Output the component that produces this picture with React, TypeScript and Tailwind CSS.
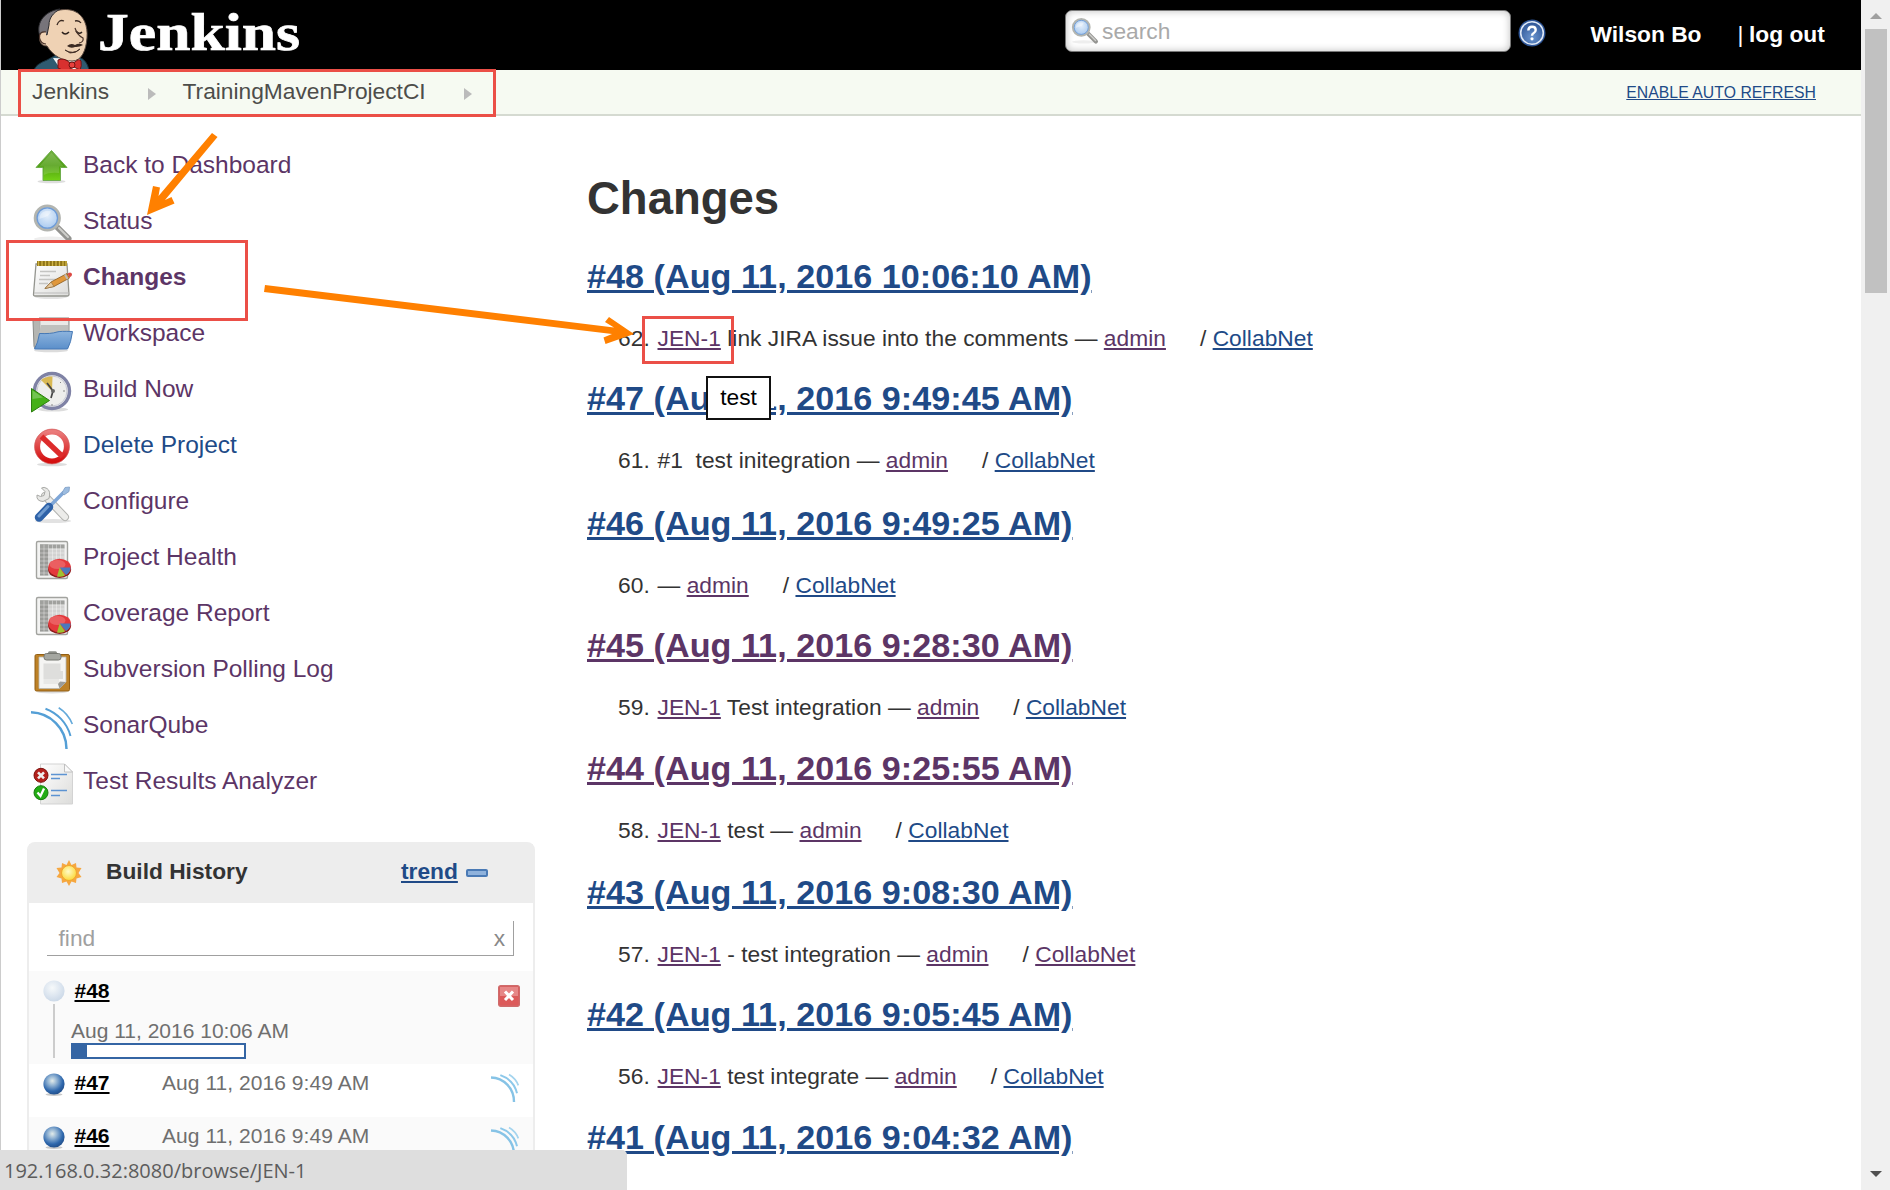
import type { ReactNode } from "react";

const VISITED = "text-[#5c3566]";
const LINK = "text-[#204a87]";

function Icon({ children, className = "size-[42px]" }: { children: ReactNode; className?: string }) {
  return (
    <svg viewBox="0 0 42 42" className={`shrink-0 overflow-visible ${className}`} fill="none">
      {children}
    </svg>
  );
}

function Gradients() {
  return (
    <svg className="absolute size-0" aria-hidden="true">
      <defs>
        <linearGradient id="green" x1="0" y1="0" x2="0" y2="1">
          <stop offset="0" stopColor="#6fae3c" />
          <stop offset=".5" stopColor="#4e9e10" />
          <stop offset="1" stopColor="#73d216" />
        </linearGradient>
        <linearGradient id="paper" x1="0" y1="0" x2="1" y2="1">
          <stop offset="0" stopColor="#ffffff" />
          <stop offset="1" stopColor="#dcdcda" />
        </linearGradient>
        <linearGradient id="folder" x1="0" y1="0" x2="0" y2="1">
          <stop offset="0" stopColor="#8db4de" />
          <stop offset="1" stopColor="#5b8fca" />
        </linearGradient>
        <linearGradient id="stop" x1="0" y1="0" x2="0" y2="1">
          <stop offset="0" stopColor="#ea7b7b" />
          <stop offset="1" stopColor="#d40f0f" />
        </linearGradient>
        <radialGradient id="glass" cx=".5" cy=".4" r=".6">
          <stop offset="0" stopColor="#e4effb" />
          <stop offset="1" stopColor="#a4c6ee" />
        </radialGradient>
        <radialGradient id="blueBall" cx=".42" cy=".35" r=".65">
          <stop offset="0" stopColor="#e3ecea" />
          <stop offset=".35" stopColor="#8fb1d2" />
          <stop offset=".75" stopColor="#2f68ad" />
          <stop offset="1" stopColor="#23508c" />
        </radialGradient>
        <radialGradient id="paleBall" cx=".42" cy=".35" r=".65">
          <stop offset="0" stopColor="#f6f9fa" />
          <stop offset=".6" stopColor="#dde6f0" />
          <stop offset="1" stopColor="#ccd9e8" />
        </radialGradient>
        <radialGradient id="sun" cx=".45" cy=".4" r=".6">
          <stop offset="0" stopColor="#fffbc8" />
          <stop offset="1" stopColor="#fcd93a" />
        </radialGradient>
        <radialGradient id="help" cx=".5" cy=".7" r=".7">
          <stop offset="0" stopColor="#6b95cf" />
          <stop offset="1" stopColor="#2c5394" />
        </radialGradient>
      </defs>
    </svg>
  );
}

const UpIcon = () => (
  <Icon>
    <ellipse cx="20.5" cy="34.5" rx="14" ry="1.8" fill="#ddd" />
    <path d="M20.5 3.5 36 20.5H29.500V33.500H12V20.500H5Z" fill="url(#green)" stroke="#6fae4c" />
    <path d="M20.500 5.500 33 19.500H28V26Q18 25 13 28V19.500H8Z" fill="#fff" opacity=".14" />
  </Icon>
);

const MagnifierIcon = ({ className }: { className?: string }) => (
  <Icon className={className}>
    <ellipse cx="20" cy="36" rx="17" ry="2.500" fill="#eee" />
    <path d="M26 24 37.500 35.500" stroke="#949491" strokeWidth="6" strokeLinecap="round" />
    <path d="M28 25 37 34" stroke="#cfcfcc" strokeWidth="2" strokeLinecap="round" />
    <circle cx="16.300" cy="15" r="12" fill="url(#glass)" stroke="#b3b5b0" strokeWidth="3.200" />
    <circle cx="16.300" cy="15" r="10.200" stroke="#6d9bd8" strokeWidth="1.300" />
    <path d="M8.500 16C8.500 9 14 7 20 8.500 18 14 13 14 8.500 16Z" fill="#fff" opacity=".4" />
  </Icon>
);

const NotepadIcon = () => (
  <Icon>
    <ellipse cx="20" cy="38" rx="16" ry="2" fill="#e4e4e4" />
    <path d="M5 5H36L38 35.500Q38 37 36.500 37H4Q2.500 37 2.500 35.500Z" fill="url(#paper)" stroke="#94958f" strokeWidth="1.300" />
    <path d="M3 34H38" stroke="#bbb" />
    <path d="M9 12.500H25M9 16.500H19M8 20.500H25M8 24.500H17" stroke="#c4c4c2" strokeWidth="1.300" />
    <path d="M6 4.500H36" stroke="#8f7417" strokeWidth="5" />
    <path d="M7.500 2V7M11 2V7M14.500 2V7M18 2V7M21.500 2V7M25 2V7M28.500 2V7M32 2V7M35 2V7" stroke="#d0b648" strokeWidth="1.300" />
    <path d="M14 29.500 20 23 36 14.500 38.500 19 23 27.500Z" fill="#e0973a" stroke="#8a5a1c" strokeWidth=".8" />
    <path d="M14 29.500 20 23 23 27.500Z" fill="#e6c79a" stroke="#8a6a3c" strokeWidth=".6" />
    <path d="M34 15.500 36.500 20" stroke="#bbb" strokeWidth="2" />
    <path d="M36.500 14.500 39 13.500Q42 14 40.500 17L38.500 18.500Z" fill="#dc4a44" />
  </Icon>
);

const FolderIcon = () => (
  <Icon>
    <ellipse cx="20" cy="35.500" rx="17" ry="1.800" fill="#dcdcdc" />
    <path d="M2 6Q2 5 3 5H8V3H38V18L35 33H4.500Q3 33 3 31Z" fill="#b5b6b2" stroke="#8a8b87" />
    <path d="M9 4H37.500V18H9Z" fill="#e9e9e7" stroke="#aaa" strokeWidth=".8" />
    <path d="M10 10H37V18H8Z" fill="#bfc0bd" />
    <path d="M8.500 18.500Q20 19 26 17 29 16 41.500 16.500Q40 28 36.500 34H3.500Q7 28 8.500 18.500Z" fill="url(#folder)" stroke="#4679b6" />
  </Icon>
);

const BuildIcon = () => (
  <Icon>
    <ellipse cx="22" cy="38.500" rx="15" ry="2" fill="#ddd" />
    <circle cx="21" cy="20" r="17.500" fill="#eeeeec" stroke="#7f82a5" strokeWidth="3.400" />
    <circle cx="21" cy="20" r="15" stroke="#c8c9d4" strokeWidth="1" />
    <path d="M21 20 10 9Q15 5 21.500 5.500Z" fill="#d9b953" />
    <path d="M16 12 22 20 20 27" stroke="#444" strokeWidth="1.700" />
    <circle cx="22" cy="20" r="2" fill="#666" />
    <path d="M21 33V35M34 20H32M30 11 29 12" stroke="#888" />
    <path d="M.5 17.500 18.500 29.500 .5 41Z" fill="#45b018" stroke="#2d7f10" />
    <path d="M1.500 19.500 12 26.500 1.500 28Z" fill="#fff" opacity=".25" />
  </Icon>
);

const StopIcon = () => (
  <Icon>
    <ellipse cx="21" cy="37.500" rx="15" ry="1.800" fill="#ddd" />
    <circle cx="21" cy="19.500" r="14.700" fill="#fff" stroke="url(#stop)" strokeWidth="5.600" />
    <path d="M10.500 9.500 31.500 29.500" stroke="#dd2c2c" strokeWidth="5.400" />
    <circle cx="21" cy="19.500" r="17.400" stroke="#d35a5a" strokeWidth=".7" />
  </Icon>
);

const ToolsIcon = () => (
  <Icon>
    <ellipse cx="22" cy="38" rx="18" ry="2" fill="#e2e2e2" />
    <path d="M14 13 34 34" stroke="#b2b3b0" strokeWidth="8" strokeLinecap="round" />
    <path d="M14 13 34 34" stroke="#ececea" strokeWidth="6" strokeLinecap="round" />
    <path d="M6 12Q5 18 12 18.500L18 15.500Q20 8 16 5.500 13 3.500 10.500 5L14 8.500 13 12.500 9.500 13.500Z" fill="#e8e8e6" stroke="#a8a9a6" />
    <path d="M19 23 33 9" stroke="#7fa7d8" strokeWidth="3.500" />
    <path d="M31 10 34 4.500 38.500 4 38 8.500 33 12Z" fill="#9cbce0" stroke="#7d9dc4" strokeWidth=".8" />
    <path d="M8 34.500 18 24" stroke="#2e62a8" strokeWidth="8.500" strokeLinecap="round" />
    <path d="M8 33 17 23.500" stroke="#6f9bd0" strokeWidth="3" strokeLinecap="round" />
  </Icon>
);

const ReportIcon = () => (
  <Icon>
    <rect x="5.500" y="2.500" width="31" height="37" rx="1.500" fill="#f3f3f2" stroke="#a2a39f" strokeWidth="1.400" />
    <rect x="9" y="5.500" width="24.500" height="31" fill="#d2d2d1" />
    <rect x="9" y="5.500" width="8.500" height="31" fill="#9a9b98" />
    <rect x="9" y="5.500" width="24.500" height="4" fill="#a0a19e" />
    <path d="M9 10H33.500M9 14H33.500M9 18H33.500M9 22H33.500M9 26H33.500M9 30H33.500M9 34H33.500M13 5.500V36.500M17.500 5.500V36.500M21.500 5.500V36.500M25.500 5.500V36.500M29.500 5.500V36.500" stroke="#fff" strokeWidth=".7" opacity=".55" />
    <ellipse cx="28.600" cy="30.500" rx="11.500" ry="8.500" fill="#8f1d1d" />
    <ellipse cx="28.600" cy="28.500" rx="11.300" ry="8.800" fill="#e4393c" />
    <ellipse cx="26.500" cy="25.500" rx="8" ry="4.500" fill="#f08080" opacity=".55" />
    <path d="M28.600 28.500 39.500 28.500Q39.500 33 35 36Z" fill="#4a79bd" />
    <path d="M28.600 28.500 34 36.500Q30 38.500 26 37.500Z" fill="#9fc330" />
  </Icon>
);

const ClipboardIcon = () => (
  <Icon>
    <ellipse cx="21" cy="41" rx="15" ry="1.500" fill="#ddd" />
    <rect x="4" y="3.500" width="34.500" height="36.500" rx="1.500" fill="#bd8126" stroke="#925f14" />
    <path d="M8 6H35V31L28.500 37.500H8Z" fill="#f5f5f3" stroke="#b9b9b4" strokeWidth=".8" />
    <path d="M12.500 12.500H29.500V20H32V28H12.500Z" fill="#dededc" />
    <path d="M12.500 28H28V33H12.500Z" fill="#e8e8e6" />
    <path d="M35 31 28.500 37.500 27 33 29 30.500Z" fill="#9b9c98" />
    <rect x="17" y=".3" width="9" height="5" rx="1.500" fill="#8c8e88" />
    <rect x="13" y="2.500" width="17" height="6.500" rx="2.500" fill="#a5a7a1" stroke="#757771" />
  </Icon>
);

const SonarIcon = ({ className }: { className?: string }) => (
  <Icon className={className}>
    <path d="M0 5.300C19 6 35.500 21 35.500 42" stroke="#549fd6" strokeWidth="2.500" />
    <path d="M14.500 1.700C26 6 36 15.500 39.500 29" stroke="#549fd6" strokeWidth="2" />
    <path d="M27.700 .7Q37 6.500 41.300 17" stroke="#63a9da" strokeWidth="1.600" />
  </Icon>
);

const SmallSonarIcon = () => (
  <Icon className="mt-[3px] size-7">
    <path d="M0 5.300C19 6 34.500 21 34.500 42" stroke="#86c3e6" strokeWidth="3.600" />
    <path d="M14 1.700C26 6 36 15.500 39 29" stroke="#8cc8ea" strokeWidth="3" />
    <path d="M27 .7Q37 6.500 41 17" stroke="#a4d4ee" strokeWidth="2.600" />
  </Icon>
);

const ResultsIcon = () => (
  <Icon>
    <path d="M9.500 1H33.500L41.500 9V41H9.500Z" fill="url(#paper)" stroke="#d3d3d3" />
    <path d="M33.500 1V9H41.500Z" fill="#fafafa" stroke="#bbb" strokeWidth=".9" />
    <path d="M20 11.500H36M20 15.500H29M20 27.500H36M20 32.500H29" stroke="#5c93d2" strokeWidth="1.300" />
    <circle cx="10" cy="12.300" r="7" fill="#b3211d" stroke="#7e1310" />
    <path d="M7 9.300 13 15.300M13 9.300 7 15.300" stroke="#eee" strokeWidth="2.600" />
    <circle cx="10" cy="29.700" r="7" fill="#22ac14" stroke="#147a0b" />
    <path d="M6.500 29.500 9.500 33 13 25.500" stroke="#fff" strokeWidth="2.300" />
  </Icon>
);

const BallIcon = ({ pale }: { pale?: boolean }) => (
  <svg viewBox="0 0 24 24" className="size-6 shrink-0">
    {!pale && <ellipse cx="12" cy="22.500" rx="8.500" ry="1.500" fill="#bbb" opacity=".8" />}
    <circle cx="12" cy="12" r="10.600" fill={pale ? "url(#paleBall)" : "url(#blueBall)"} />
  </svg>
);

const Butler = () => (
  <svg viewBox="0 0 60 63" className="h-[63px] w-[60px]" fill="none">
    <path d="M1 63Q3 57 14 53L23 48 46 50Q54 53 56 63Z" fill="#2f5a70" stroke="#18303c" />
    <path d="M20 51 28 63H46L47 52Z" fill="#f4f4f4" />
    <path d="M12 16C15 4 30 0 41 4 51 8 55 19 54 31 53 43 49 54 39 54 30 54 20 49 14 39 7 39 6 33 7 29Z" fill="#efd2b4" stroke="#5b4a40" strokeWidth="1" />
    <path d="M6.500 28C3 15 12 4 27 2 20 6 16 11 16 18L14 28 10 26Z" fill="#77747a" stroke="#2b2b2f" />
    <path d="M13 25Q6 24 6.500 31 8 37 13 37" stroke="#4a342b" strokeWidth="1.200" fill="#efd2b4" />
    <path d="M24 18Q26 12 31 14M42 14Q46 13 48 16" stroke="#3a2a22" strokeWidth="1.300" />
    <path d="M29 25Q32 29 36 25M43 24Q46 28 49 25" stroke="#2b211c" strokeWidth="1.500" />
    <path d="M42 21Q44 28 50 31 51 35 46 36" stroke="#4a342b" strokeWidth="1.200" />
    <path d="M34 39Q38 35.500 42 38 46 35.500 50 38 46 40.500 42 40 38 42 34 39Z" fill="#3a2a22" />
    <path d="M32 43Q40 48 47 42 43 46.500 37 46Z" fill="#6b4034" stroke="#3a2a22" strokeWidth=".8" />
    <path d="M25 53Q31 50 37 56L42 55Q46 51 48 54 49 59 47 63L41 60 35 63Q27 63 25 61Z" fill="#d8302f" stroke="#6e1413" />
    <circle cx="39" cy="58" r="3" fill="#e8403d" stroke="#6e1413" />
  </svg>
);

const menu: { label: string; icon: ReactNode; style: string }[] = [
  { label: "Back to Dashboard", icon: <UpIcon />, style: VISITED },
  { label: "Status", icon: <MagnifierIcon />, style: VISITED },
  { label: "Changes", icon: <NotepadIcon />, style: "font-bold text-[#5c3566]" },
  { label: "Workspace", icon: <FolderIcon />, style: VISITED },
  { label: "Build Now", icon: <BuildIcon />, style: VISITED },
  { label: "Delete Project", icon: <StopIcon />, style: LINK },
  { label: "Configure", icon: <ToolsIcon />, style: VISITED },
  { label: "Project Health", icon: <ReportIcon />, style: VISITED },
  { label: "Coverage Report", icon: <ReportIcon />, style: VISITED },
  { label: "Subversion Polling Log", icon: <ClipboardIcon />, style: VISITED },
  { label: "SonarQube", icon: <SonarIcon />, style: VISITED },
  { label: "Test Results Analyzer", icon: <ResultsIcon />, style: VISITED },
];

type Change = {
  build: string;
  visited?: boolean;
  height: string;
  no?: number;
  issue?: boolean;
  text?: string;
  repoVisited?: boolean;
};

const changes: Change[] = [
  { build: "#48 (Aug 11, 2016 10:06:10 AM)", height: "h-[122px]", no: 62, issue: true, text: " link JIRA issue into the comments — " },
  { build: "#47 (Aug 11, 2016 9:49:45 AM)", height: "h-[125px]", no: 61, text: "#1  test initegration — " },
  { build: "#46 (Aug 11, 2016 9:49:25 AM)", height: "h-[122px]", no: 60, text: "— " },
  { build: "#45 (Aug 11, 2016 9:28:30 AM)", height: "h-[123px]", visited: true, no: 59, issue: true, text: " Test integration — " },
  { build: "#44 (Aug 11, 2016 9:25:55 AM)", height: "h-[124px]", visited: true, no: 58, issue: true, text: " test — " },
  { build: "#43 (Aug 11, 2016 9:08:30 AM)", height: "h-[122px]", no: 57, issue: true, text: " - test integration — ", repoVisited: true },
  { build: "#42 (Aug 11, 2016 9:05:45 AM)", height: "h-[123px]", no: 56, issue: true, text: " test integrate — " },
  { build: "#41 (Aug 11, 2016 9:04:32 AM)", height: "h-[40px]" },
];

function ChangeEntry({ c }: { c: Change }) {
  return (
    <section className={c.height}>
      <h2 className={`text-[34.125px] leading-10 font-bold tracking-[0.05px] underline ${c.visited ? VISITED : LINK}`}>{c.build}</h2>
      {c.no && (
        <div className="mt-[29px] flex pl-[31px] leading-[26px] tracking-[0.03px] whitespace-pre">
          <span className="w-[39.5px]">{c.no}.</span>
          {c.issue && <a className={`underline ${VISITED}`}>JEN-1</a>}
          <span>{c.text}</span>
          <a className={`mr-[34px] underline ${VISITED}`}>admin</a>
          <span>/ </span>
          <a className={`underline ${c.repoVisited ? VISITED : LINK}`}>CollabNet</a>
        </div>
      )}
    </section>
  );
}

function Header() {
  return (
    <header className="flex h-[70px] shrink-0 bg-black font-bold text-white">
      <div className="flex w-[320px] pt-[7px] pl-[32px]">
        <Butler />
        <svg viewBox="0 0 206 56" className="-ml-px h-14 w-[206px] overflow-visible">
          <text
            x="6"
            y="42.500"
            textLength="202"
            lengthAdjust="spacingAndGlyphs"
            fill="#fff"
            stroke="#fff"
            strokeWidth=".7"
            className="font-['Liberation_Serif',serif] text-[53px] font-bold"
          >
            Jenkins
          </text>
        </svg>
      </div>
      <div className="mt-[10px] ml-auto flex h-[42px] w-[446px] items-center rounded-[7px] border border-[#777] bg-white pl-[4px] font-normal text-[#a9a9a9] shadow-[inset_0_0_7px_1px_#ccc]">
        <MagnifierIcon className="mt-px size-[29px]" />
        <span className="ml-[3px]">search</span>
      </div>
      <svg viewBox="0 0 28 28" className="mt-[19px] ml-[7px] size-7 shrink-0">
        <circle cx="14" cy="14" r="13.500" fill="#2c5394" />
        <circle cx="14" cy="14" r="11.300" fill="url(#help)" stroke="#dfe8f5" strokeWidth="1.600" />
        <path d="M10.300 11.500Q10.500 7.800 14 7.800 17.700 7.800 17.700 11 17.700 13 15.500 14.200 14 15 14 16.800" stroke="#fff" strokeWidth="2.400" fill="none" />
        <circle cx="14" cy="19.800" r="1.600" fill="#fff" />
      </svg>
      <div className="mt-[21px] ml-[44.5px] flex w-[270.5px] leading-[26px]">
        <span className="w-[147px]">Wilson Bo</span>
        <span className="w-[11.5px] font-normal">|</span>
        <span>log out</span>
      </div>
    </header>
  );
}

const Crumb = () => (
  <svg viewBox="0 0 8 12" className="mt-[3px] h-3 w-2">
    <path d="M0 0 8 6 0 12Z" fill="#bbb" />
  </svg>
);

function Breadcrumbs() {
  return (
    <nav className="flex h-[46px] shrink-0 items-center border-b-2 border-[#d5dad1] bg-[#f6faf2] pr-[45px] pl-[31px] text-[#4d4d4a]">
      <span className="-mt-[2px] w-[116px]">Jenkins</span>
      <Crumb />
      <span className="-mt-[2px] ml-[26.5px] w-[281.5px]">TrainingMavenProjectCI</span>
      <Crumb />
      <a className={`mt-px ml-auto text-[15.75px] tracking-[0.05px] underline ${LINK}`}>ENABLE AUTO REFRESH</a>
    </nav>
  );
}

function HistoryRow({ no, shaded }: { no: string; shaded?: boolean }) {
  return (
    <div className={`flex h-[53px] pt-[7px] pl-[13px] text-[21px] leading-6 ${shaded ? "bg-[#fafafa]" : ""}`}>
      <div className="mt-px">
        <BallIcon />
      </div>
      <a className="ml-[8.5px] w-[87.5px] font-bold text-black underline">{no}</a>
      <span className="w-[329px] tracking-[0.05px] text-[#6f6f6f]">Aug 11, 2016 9:49 AM</span>
      <SmallSonarIcon />
    </div>
  );
}

function BuildHistory() {
  return (
    <div className="ml-[26px] h-[360px] w-[508px] rounded-t-[8px] border-2 border-[#ededed]">
      <div className="flex h-[59px] items-center bg-[#ededed] pb-[6px] pl-[27px] font-bold text-[#333]">
        <svg viewBox="0 0 26 26" className="mt-1 size-[26px]">
          <path d="M13 0 15.500 5 20 3 20.500 7.500 25.500 8 22.500 13 25.500 17 20.500 18.500 20 23 15.500 21.500 13 26 10.500 21.500 6 23 5.500 18.500 .5 17 3.500 13 .5 8 5.500 7.500 6 3 10.500 5Z" fill="#f6a740" />
          <circle cx="13" cy="13" r="7.500" fill="url(#sun)" stroke="#f0a72c" />
        </svg>
        <span className="ml-[24px] w-[295px]">Build History</span>
        <a className={`underline ${LINK}`}>trend</a>
        <span className="mt-[5px] ml-[8px] h-[8px] w-[22px] rounded-[2px] border-2 border-[#4a7ab5] bg-[#8fb2dc]" />
      </div>
      <div className="mt-[18px] mr-[19px] ml-[18px] flex h-[35px] items-center justify-between border-r-[1.500px] border-b-[1.500px] border-[#a0a0a0] pr-[8px] pl-[11.5px] text-[#a0a0a0]">
        <span>find</span>
        <span className="text-[#888]">x</span>
      </div>
      <div className="mt-[15px] flex h-[93px] bg-[#fafafa] pl-[13px] text-[21px] leading-6">
        <div className="flex w-6 flex-col items-center pt-[8px]">
          <BallIcon pale />
          <span className="mt-px h-[54px] w-[2px] bg-[#ccc]" />
        </div>
        <div className="flex w-[422px] flex-col pt-[8px]">
          <a className="ml-[8.5px] font-bold text-black underline">#48</a>
          <span className="mt-[16px] ml-[5px] text-[#6f6f6f]">Aug 11, 2016 10:06 AM</span>
          <div className="ml-[5px] h-[16px] w-[175px] border-2 border-[#3465a4] bg-white">
            <div className="h-full w-[14px] bg-[#3465a4]" />
          </div>
        </div>
        <svg viewBox="0 0 22 22" className="mt-[14px] ml-[10px] size-[22px]">
          <rect x=".7" y=".7" width="20.600" height="20.600" rx="2" fill="#dc5a5a" stroke="#cf6b6b" strokeWidth="1.400" />
          <rect x="2" y="2" width="18" height="9" fill="#e99a9a" opacity=".7" />
          <path d="M7 6.500 15 15M15 6.500 7 15" stroke="#fff" strokeWidth="3" />
        </svg>
      </div>
      <HistoryRow no="#47" />
      <HistoryRow no="#46" shaded />
    </div>
  );
}

function Scrollbar() {
  return (
    <div className="flex w-[29px] shrink-0 flex-col items-center bg-[#f0f0f0] pt-[13px] pb-[13px]">
      <svg viewBox="0 0 12 6" className="h-[6px] w-[12px]">
        <path d="M0 6 6 0 12 6Z" fill="#a0a0a0" />
      </svg>
      <div className="mt-[10px] h-[264px] w-[22px] bg-[#c1c1c1]" />
      <svg viewBox="0 0 12 6" className="mt-auto h-[6px] w-[12px]">
        <path d="M0 0 6 6 12 0Z" fill="#505050" />
      </svg>
    </div>
  );
}

function Annotations() {
  return (
    <>
      <div className="absolute top-[376px] left-[706px] flex h-[44px] w-[65px] items-center justify-center border-2 border-[#111] bg-white pb-[2px] text-black">test</div>
      <div className="absolute top-[384px] left-[771px] h-[24px] w-[3px] bg-white" />
      <div className="absolute top-[69px] left-[18px] h-[48px] w-[478px] border-3 border-[#eb4f47]" />
      <div className="absolute top-[240px] left-[6px] h-[81px] w-[242px] border-3 border-[#eb4f47]" />
      <svg viewBox="0 0 500 230" className="absolute top-[120px] left-[140px] h-[230px] w-[500px]">
        <g transform="translate(-140 -120)" fill="#ff8000">
          <path d="M147 215 153 186 160 187.500 158.500 196 212 133 217.500 137 165 200 171.500 197 174.500 203.500Z" />
          <path d="M634 334 609 317 605 322 614 327.500 265 285 264 292 612 334 603.500 337.500 605.500 344Z" />
        </g>
      </svg>
      <div className="absolute top-[316px] left-[642px] h-[48px] w-[92px] border-3 border-[#eb4f47]" />
      <div className="absolute bottom-0 left-0 h-[40px] w-[627px] rounded-tr-[5px] bg-[#dedede] pl-[4px] font-['Open_Sans',sans-serif] text-[20px] leading-[41px] text-[#5c5c5c]">
        192.168.0.32:8080/browse/JEN-1
      </div>
    </>
  );
}

export default function App() {
  return (
    <div className="relative flex h-[1190px] w-[1890px] overflow-hidden bg-white font-['Liberation_Sans',Arial,sans-serif] text-[22.75px] leading-[26px] text-[#333]">
      <Gradients />
      <div className="flex min-w-0 flex-1 flex-col border-l border-[#ccc]">
        <Header />
        <Breadcrumbs />
        <div className="flex">
          <aside className="w-[586px] shrink-0 pt-[22px]">
            <ul className="mb-[32px]">
              {menu.map((m) => (
                <li key={m.label} className="flex h-14 items-center pl-[30px] text-[24.5px] leading-7">
                  <div className="mt-[3px]">{m.icon}</div>
                  <a className={`-mt-[2px] ml-[10px] ${m.style}`}>{m.label}</a>
                </li>
              ))}
            </ul>
            <BuildHistory />
          </aside>
          <main className="h-[1074px] overflow-hidden pt-[57px]">
            <h1 className="mb-[32px] text-[45.5px] leading-[51px] font-bold">Changes</h1>
            {changes.map((c) => (
              <ChangeEntry key={c.build} c={c} />
            ))}
          </main>
        </div>
      </div>
      <Scrollbar />
      <Annotations />
    </div>
  );
}
